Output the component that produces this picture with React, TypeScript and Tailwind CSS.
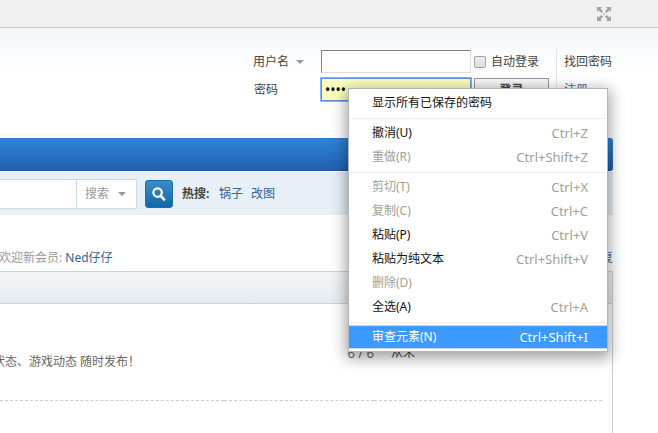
import type { ReactNode } from 'react';

type MenuEntry =
  | { kind: 'separator' }
  | { kind: 'item'; label: string; keys?: string; disabled?: boolean; active?: boolean };

const menu: MenuEntry[] = [
  { kind: 'item', label: '显示所有已保存的密码' },
  { kind: 'separator' },
  { kind: 'item', label: '撤消(U)', keys: 'Ctrl+Z' },
  { kind: 'item', label: '重做(R)', keys: 'Ctrl+Shift+Z', disabled: true },
  { kind: 'separator' },
  { kind: 'item', label: '剪切(T)', keys: 'Ctrl+X', disabled: true },
  { kind: 'item', label: '复制(C)', keys: 'Ctrl+C', disabled: true },
  { kind: 'item', label: '粘贴(P)', keys: 'Ctrl+V' },
  { kind: 'item', label: '粘贴为纯文本', keys: 'Ctrl+Shift+V' },
  { kind: 'item', label: '删除(D)', disabled: true },
  { kind: 'item', label: '全选(A)', keys: 'Ctrl+A' },
  { kind: 'separator' },
  { kind: 'item', label: '审查元素(N)', keys: 'Ctrl+Shift+I', active: true },
];

function Caret() {
  return (
    <svg className="pointer-events-none -ml-2 h-1 w-2 shrink-0" viewBox="0 0 8 4" aria-hidden="true">
      <path d="M0 0h8L4 4z" fill="#999" />
    </svg>
  );
}

function ExpandIcon() {
  return (
    <svg className="size-[14px]" viewBox="0 0 14 14" aria-hidden="true">
      <g fill="#a3a3a3">
        <path d="M0 0h5L3.6 1.5 6 4.4 4.4 6 1.5 3.6 0 5z" />
        <path d="M14 0v5l-1.5-1.4L9.6 6 8 4.4l2.4-2.9L9 0z" />
        <path d="M0 14V9l1.5 1.4L4.4 8 6 9.6l-2.4 2.9L5 14z" />
        <path d="M14 14H9l1.4-1.5L8 9.6 9.6 8l2.9 2.4L14 9z" />
        <path d="M6.3 6.3h1.4v1.4H6.3z" />
      </g>
    </svg>
  );
}

function TextLink({ children }: { children: ReactNode }) {
  return (
    <a href="#" className="text-[#336699]">
      {children}
    </a>
  );
}

function LoginForm() {
  return (
    <form className="flex items-start justify-end pt-5">
      <div className="grid auto-rows-[28px] grid-cols-[68px_150px_85px] items-start pt-0.5">
        <div className="flex">
          <select aria-label="登录方式" className="h-6 w-[51px] appearance-none pr-3 outline-none">
            <option>用户名</option>
          </select>
          <span className="flex h-6 items-center">
            <Caret />
          </span>
        </div>
        <input
          type="text"
          aria-label="用户名"
          className="h-[23px] border border-[#ddd] border-t-[#848484] border-l-[#848484] bg-white px-1 outline-none"
        />
        <label className="flex h-6 items-center gap-[5px] pl-[3px]">
          <input
            type="checkbox"
            className="size-3 appearance-none rounded-xs border border-[#a5a5a5] bg-linear-to-b from-[#eee] to-[#dcdcdc]"
          />
          自动登录
        </label>
        <label htmlFor="password" className="flex h-6 items-center pl-px">
          密码
        </label>
        <input
          id="password"
          type="password"
          defaultValue="pass"
          className="h-[23px] border border-[#5e8ddb] bg-[#faffbd] px-[3px] text-sm text-black outline-1 outline-[#8db2f0]"
        />
        <button
          type="button"
          className="ml-[3px] h-[23px] w-[75px] border border-[#999] bg-linear-to-b from-[#f8f8f8] to-[#e6e6e6] font-bold"
        >
          登录
        </button>
      </div>
      <div className="flex w-[57px] flex-col border-l border-[#e0e9f0] pt-0.5 pl-[7px]">
        <a href="#" className="h-7 leading-6">
          找回密码
        </a>
        <a href="#" className="h-7 leading-6 text-[#336699]">
          注册
        </a>
      </div>
    </form>
  );
}

function SearchBar() {
  return (
    <form className="mt-px flex h-[43px] items-center bg-[#e8eff6]">
      <input
        type="text"
        aria-label="搜索内容"
        className="h-[30px] w-[77px] border-y border-r border-[#ccdbe3] bg-white outline-none"
      />
      <div className="flex h-[30px] w-[60px] items-center border-y border-r border-[#ccdbe3] bg-white text-[#999]">
        <select aria-label="搜索范围" className="h-7 w-[49px] appearance-none pl-2 outline-none">
          <option>搜索</option>
        </select>
        <Caret />
      </div>
      <button
        type="button"
        aria-label="搜索"
        className="ml-2 flex size-7 items-center justify-center rounded-[3px] border border-[#1c6eae] bg-linear-to-b from-[#3b8cc9] to-[#0d68a8]"
      >
        <svg className="size-[14px]" viewBox="0 0 14 14" fill="none" stroke="#fff" aria-hidden="true">
          <circle cx="5.6" cy="5.6" r="4.2" strokeWidth="2.2" />
          <path d="M8.8 9l4 4.2" strokeWidth="2.6" />
        </svg>
      </button>
      <div className="flex pl-[9px]">
        <strong className="w-[37px]">热搜:</strong>
        <span className="flex gap-2">
          <TextLink>锅子</TextLink>
          <TextLink>改图</TextLink>
        </span>
      </div>
    </form>
  );
}

function ContextMenu() {
  return (
    <div
      role="menu"
      className="absolute top-[88px] right-[50px] w-[260px] border border-[#b4b4b4] bg-white py-0.5 shadow-[0_4px_14px_2px_rgba(0,0,0,0.38)]"
    >
      {menu.map((entry, i) => {
        if (entry.kind === 'separator') {
          return (
            <div key={i} role="separator" className="px-px pt-[3px] pb-0.5">
              <div className="h-px bg-[#ededed]" />
            </div>
          );
        }
        const tone = entry.active
          ? 'bg-[#3b99ff] text-white border-[#c4dcf5]'
          : entry.disabled
            ? 'text-[#a0a096] border-transparent'
            : 'text-[#111] border-transparent';
        const keyTone = entry.active ? 'text-[13px] text-white' : 'text-[13px] text-[#a0a096]';
        return (
          <button
            key={i}
            type="button"
            role="menuitem"
            className={`flex h-6 w-full items-center justify-between border-y pr-[19px] pl-[23px] ${tone}`}
          >
            <span>{entry.label}</span>
            <span className={keyTone}>{entry.keys}</span>
          </button>
        );
      })}
    </div>
  );
}

export default function App() {
  return (
    <div className="relative flex min-h-screen flex-col overflow-hidden bg-white font-['Noto_Sans','Noto_Sans_CJK_SC',sans-serif] text-xs leading-[18px] text-[#444]">
      <div className="flex h-7 items-center justify-end border-b border-[#c8c8cc] bg-[#f0f0f0] pr-[47px]">
        <button type="button" aria-label="全屏">
          <ExpandIcon />
        </button>
      </div>
      <div className="flex flex-1 flex-col bg-linear-to-b from-[#f2f6f9] to-white to-[40px] pr-[45px]">
        <header className="h-[110px]">
          <LoginForm />
        </header>
        <nav className="h-[33px] rounded-r-[3px] border-y border-t-[#2b7acd] border-b-[#1d5596] bg-linear-to-b from-[#2f83d6] to-[#2060b0]" />
        <SearchBar />
        <div className="flex h-14 items-end justify-between pb-1">
          <p className="-ml-px text-[#999]">
            欢迎新会员: <TextLink>Ned仔仔</TextLink>
          </p>
          <TextLink>最新回复</TextLink>
        </div>
        <section className="flex-1 border-t border-r border-t-[#c2d5e3] border-r-[#ccc] pr-[10px]">
          <div className="-mr-[10px] h-8 border-b border-[#c2d5e3] bg-linear-to-b from-[#f2f6f8] to-[#e5ecf1]" />
          <table className="w-full border-collapse">
            <tbody>
              <tr className="h-24 border-b border-dashed border-[#ccc]">
                <td className="pt-5 text-[#666]">
                  <p className="-ml-[7px] whitespace-nowrap">状态、游戏动态 随时发布！</p>
                </td>
                <td className="w-[150px] pt-0.5 text-right text-[13px] text-[#666]">6 / 6</td>
                <td className="w-[228px] pt-0.5 pl-[17px]">从未</td>
              </tr>
            </tbody>
          </table>
        </section>
      </div>
      <ContextMenu />
    </div>
  );
}
